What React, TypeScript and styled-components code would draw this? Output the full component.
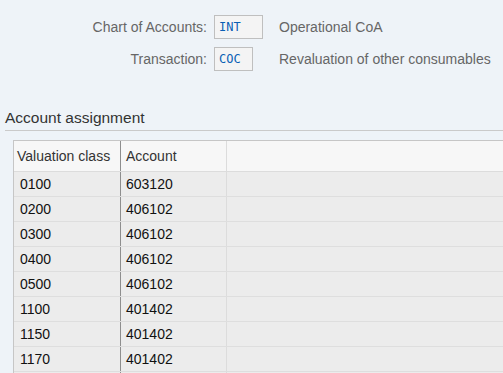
import React from "react";
import styled, { createGlobalStyle } from "styled-components";

const GlobalStyle = createGlobalStyle`
  html, body {
    margin: 0;
    padding: 0;
    background: #eef3f8;
    overflow: hidden;
  }
  body {
    font-family: "Liberation Sans", Arial, sans-serif;
  }
`;

const rows = [
  { cls: "0100", account: "603120" },
  { cls: "0200", account: "406102" },
  { cls: "0300", account: "406102" },
  { cls: "0400", account: "406102" },
  { cls: "0500", account: "406102" },
  { cls: "1100", account: "401402" },
  { cls: "1150", account: "401402" },
  { cls: "1170", account: "401402" },
  { cls: "", account: "" },
];

const App = () => {
  return (
    <Page>
      <GlobalStyle />
      <Header>
        <Label>Chart of Accounts:</Label>
        <Field $width={49}>INT</Field>
        <Desc>Operational CoA</Desc>
        <Label>Transaction:</Label>
        <Field $width={39}>COC</Field>
        <Desc>Revaluation of other consumables</Desc>
      </Header>

      <SectionTitle>Account assignment</SectionTitle>

      <Table>
        <HeadRow>
          <HeadCell $first>Valuation class</HeadCell>
          <HeadCell $strong>Account</HeadCell>
          <HeadCell />
        </HeadRow>
        {rows.map((r, i) => (
          <Row key={i}>
            <Cell $first>{r.cls}</Cell>
            <Cell $strong>{r.account}</Cell>
            <Cell />
          </Row>
        ))}
      </Table>
    </Page>
  );
};

export default App;

const Page = styled.div`
  width: 503px;
  height: 373px;
  overflow: hidden;
`;

const Header = styled.div`
  display: grid;
  grid-template-columns: 207px 58px 1fr;
  column-gap: 7px;
  row-gap: 8px;
  padding-top: 15px;
  align-items: center;
`;

const Label = styled.div`
  text-align: right;
  font-size: 14px;
  color: #666666;
`;

const Field = styled.div<{ $width: number }>`
  width: ${(p) => p.$width}px;
  height: 24px;
  box-sizing: border-box;
  border: 1px solid #bfbfbf;
  background: #f4f4f4;
  padding-left: 4px;
  font-family: "DejaVu Sans Mono", "Liberation Mono", monospace;
  font-size: 12px;
  line-height: 22px;
  color: #0a5fb4;
`;

const Desc = styled.div`
  font-size: 14px;
  color: #666666;
  white-space: nowrap;
`;

const SectionTitle = styled.h2`
  margin: 37px 0 0 5px;
  padding-bottom: 3px;
  font-size: 15.5px;
  font-weight: normal;
  line-height: 19px;
  color: #333333;
  border-bottom: 1px solid #cacaca;
`;

const Table = styled.div`
  margin: 9px 0 0 13px;
  border-left: 1px solid #c6c6c6;
  border-top: 1px solid #c6c6c6;
`;

const HeadRow = styled.div`
  display: grid;
  grid-template-columns: 107px 106px 1fr;
  height: 31px;
  box-sizing: border-box;
  background: #f7f7f7;
  border-bottom: 1px solid #dcdcdc;
`;

const Row = styled(HeadRow)`
  height: 25px;
  background: #ececec;
  border-bottom: 1px solid #dedede;
`;

const HeadCell = styled.div<{ $first?: boolean; $strong?: boolean }>`
  display: flex;
  align-items: center;
  padding-left: ${(p) => (p.$first ? "3px" : "5px")};
  font-size: 14px;
  color: #333333;
  white-space: nowrap;
  border-right: ${(p) =>
    p.$first ? "1px solid #8e8e8e" : p.$strong ? "1px solid #dcdcdc" : "none"};
`;

const Cell = styled(HeadCell)`
  padding-left: ${(p) => (p.$first ? "6px" : "5px")};
  color: #111111;
`;
